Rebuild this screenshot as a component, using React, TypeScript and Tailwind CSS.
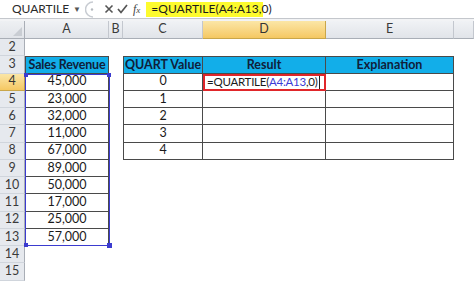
import React from "react";

const aVals = ["45,000", "23,000", "32,000", "11,000", "67,000", "89,000", "50,000", "17,000", "25,000", "57,000"];
const cVals = ["0", "1", "2", "3", "4"];
const colLetters = ["A", "B", "C", "D", "E", ""];

function RowHeader({ n }: { n: number }) {
  const active = n === 4;
  return (
    <div
      className={
        active
          ? "flex items-center justify-center border-b border-r border-b-[#c9a64a] border-r-[#b89a4e] bg-gradient-to-b from-[#fbe6a6] to-[#f5c862] text-[#333]"
          : "flex items-center justify-center border-b border-r border-b-[#d0d5dc] border-r-[#a9aeb6] bg-[#e6e9ee] text-[#3a3a3a]"
      }
    >
      {n}
    </div>
  );
}

function ColHeader({ l }: { l: string }) {
  const active = l === "D";
  return (
    <div
      className={
        active
          ? "flex items-center justify-center border-r border-b border-r-[#c9a64a] border-b-[#c9a64a] bg-gradient-to-b from-[#fbe6a6] to-[#f5c862] text-[#333]"
          : "flex items-center justify-center border-r border-b border-r-[#c3c7ce] border-b-[#a9aeb6] bg-gradient-to-b from-[#f0f2f5] to-[#e1e4e9] text-[#3a3a3a]"
      }
    >
      {l}
    </div>
  );
}

export default function App() {
  const rows: React.ReactNode[] = [];
  for (let r = 2; r <= 15; r++) {
    rows.push(<RowHeader key={`h${r}`} n={r} />);
    // A
    if (r === 3) {
      rows.push(
        <div key={`a${r}`} className="flex items-center justify-center border border-[#4a4a4a] bg-[#12aee9] font-bold tracking-[-0.2px] text-[#10203a] whitespace-nowrap">
          Sales Revenue
        </div>
      );
    } else if (r >= 4 && r <= 13) {
      rows.push(
        <div key={`a${r}`} className="flex items-center justify-center border-l border-r border-b border-[#4a4a4a] text-[#1a1a1a]">
          {aVals[r - 4]}
        </div>
      );
    } else {
      rows.push(<div key={`a${r}`} />);
    }
    // B
    rows.push(<div key={`b${r}`} />);
    // C, D, E
    if (r === 3) {
      rows.push(
        <div key={`c${r}`} className="flex items-center justify-center border border-[#4a4a4a] bg-[#12aee9] font-bold text-[#10203a] whitespace-nowrap">
          QUART Value
        </div>
      );
      rows.push(
        <div key={`d${r}`} className="flex items-center justify-center border-t border-r border-b border-[#4a4a4a] bg-[#12aee9] font-bold text-[#10203a]">
          Result
        </div>
      );
      rows.push(
        <div key={`e${r}`} className="flex items-center justify-center border-t border-r border-b border-[#4a4a4a] bg-[#12aee9] font-bold text-[#10203a]">
          Explanation
        </div>
      );
    } else if (r >= 4 && r <= 8) {
      rows.push(
        <div key={`c${r}`} className="flex items-center justify-center border-l border-r border-b border-[#4a4a4a] text-[#1a1a1a]">
          {cVals[r - 4]}
        </div>
      );
      if (r === 4) {
        rows.push(
          <div key={`d${r}`} className="flex items-center overflow-hidden border-2 border-[#e0262a] pl-[2px] text-[11.5px] tracking-[-0.25px] text-[#1a1a1a] whitespace-nowrap">
            <span>=QUARTILE(</span>
            <span className="text-[#3b3bd6]">A4:A13</span>
            <span>,0)</span>
            <span className="ml-[1px] inline-block h-[13px] w-px bg-[#222]" />
          </div>
        );
      } else {
        rows.push(<div key={`d${r}`} className="border-r border-b border-[#4a4a4a]" />);
      }
      rows.push(<div key={`e${r}`} className="border-r border-b border-[#4a4a4a]" />);
    } else {
      rows.push(<div key={`c${r}`} />);
      rows.push(<div key={`d${r}`} />);
      rows.push(<div key={`e${r}`} />);
    }
    rows.push(<div key={`f${r}`} />);
  }

  return (
    <div className="relative h-[283px] w-[474px] overflow-hidden bg-white text-[12.5px] leading-none" style={{ fontFamily: "Lato, 'Open Sans', sans-serif" }}>
      {/* Formula bar */}
      <div className="flex h-[19px] items-center border-b border-[#c4c7cc] bg-white">
        <div className="flex h-full w-[84px] items-center pl-[12px] text-[#2a2a2a]">
          <span className="text-[12px]">QUARTILE</span>
          <span className="ml-auto mr-[3px] text-[8px] text-[#555]">▼</span>
        </div>
        <svg width="12" height="17" viewBox="0 0 12 17" className="ml-[1px]">
          <path d="M8 1 A7 7 0 0 0 8 16" fill="none" stroke="#c8ccd2" strokeWidth="1.5" />
          <circle cx="7" cy="8.5" r="1.2" fill="#b5b9bf" />
        </svg>
        <svg width="10" height="10" viewBox="0 0 10 10" className="ml-[7px]">
          <path d="M1.5 1.5 L8.5 8.5 M8.5 1.5 L1.5 8.5" stroke="#555" strokeWidth="1.6" />
        </svg>
        <svg width="11" height="10" viewBox="0 0 11 10" className="ml-[3px]">
          <path d="M1 5 L4 8.5 L10 1" fill="none" stroke="#555" strokeWidth="1.7" />
        </svg>
        <span className="ml-[5px] text-[12px] italic text-[#444]" style={{ fontFamily: "'Liberation Serif', serif" }}>
          f<span className="text-[9px]">x</span>
        </span>
        <div className="ml-[6px] flex h-[15px] w-[117px] items-center bg-[#fdfb2e] pl-[5px] text-[12px] text-[#1a1a1a]">
          =QUARTILE(A4:A13,0)
        </div>
      </div>
      <div className="h-[2px] bg-[#f2f3f5]" />
      {/* Grid */}
      <div className="relative grid grid-cols-[25px_84px_14px_80px_123px_128px_20px] grid-rows-[18px_repeat(14,17.25px)]">
        <div className="relative border-r border-b border-r-[#a9aeb6] border-b-[#a9aeb6] bg-gradient-to-b from-[#eef0f3] to-[#e1e4e9]">
          <svg width="9" height="9" viewBox="0 0 9 9" className="absolute bottom-[2px] right-[2px]">
            <path d="M9 0 L9 9 L0 9 Z" fill="#c9cdd3" />
          </svg>
        </div>
        {colLetters.map((l, i) => (
          <ColHeader key={`ch${i}`} l={l} />
        ))}
        {rows}
        <div className="pointer-events-none absolute left-[25px] top-[52.5px] h-[172.5px] w-[85px] border border-[#3b3bcf]">
          <span className="absolute left-[-2px] top-[-2px] h-[4px] w-[4px] bg-[#3b3bcf]" />
          <span className="absolute right-[-2px] top-[-2px] h-[4px] w-[4px] bg-[#3b3bcf]" />
          <span className="absolute bottom-[-2px] left-[-2px] h-[4px] w-[4px] bg-[#3b3bcf]" />
          <span className="absolute bottom-[-3px] right-[-3px] h-[5px] w-[5px] bg-[#3b3bcf]" />
        </div>
      </div>
    </div>
  );
}
